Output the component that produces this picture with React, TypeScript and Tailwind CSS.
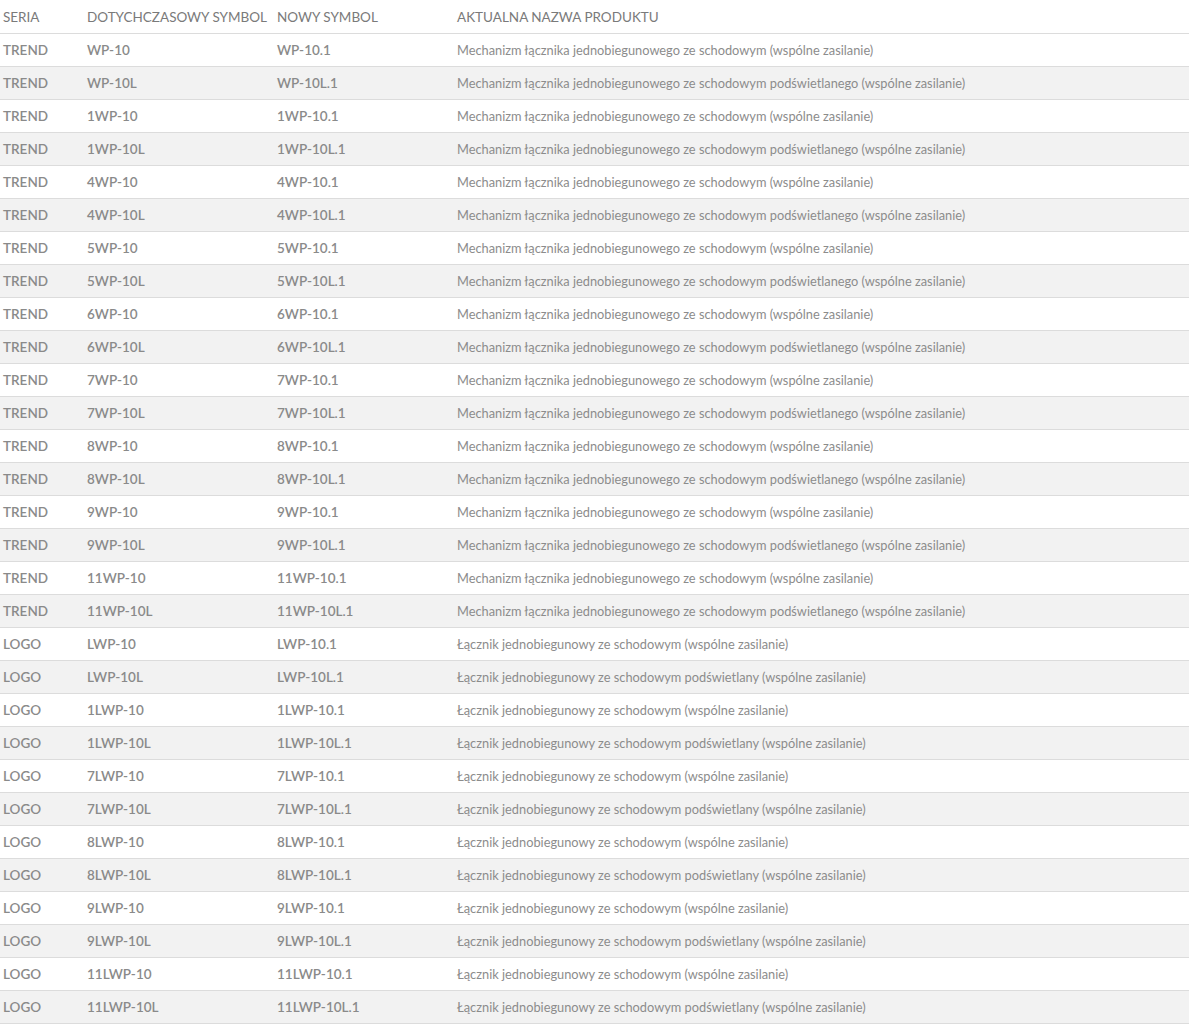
const trend = ['', '1', '4', '5', '6', '7', '8', '9', '11'];
const logo = ['', '1', '7', '8', '9', '11'];

type Row = { seria: string; old: string; next: string; name: string };

const rows: Row[] = [];
trend.forEach((p) => {
  rows.push({
    seria: 'TREND',
    old: `${p}WP-10`,
    next: `${p}WP-10.1`,
    name: 'Mechanizm łącznika jednobiegunowego ze schodowym (wspólne zasilanie)',
  });
  rows.push({
    seria: 'TREND',
    old: `${p}WP-10L`,
    next: `${p}WP-10L.1`,
    name: 'Mechanizm łącznika jednobiegunowego ze schodowym podświetlanego (wspólne zasilanie)',
  });
});
logo.forEach((p) => {
  rows.push({
    seria: 'LOGO',
    old: `${p}LWP-10`,
    next: `${p}LWP-10.1`,
    name: 'Łącznik jednobiegunowy ze schodowym (wspólne zasilanie)',
  });
  rows.push({
    seria: 'LOGO',
    old: `${p}LWP-10L`,
    next: `${p}LWP-10L.1`,
    name: 'Łącznik jednobiegunowy ze schodowym podświetlany (wspólne zasilanie)',
  });
});

export default function App() {
  return (
    <div className="bg-white w-[1191px]" style={{ fontFamily: 'Lato, "Open Sans", sans-serif' }}>
      <table className="w-[1189px] border-collapse text-left">
        <thead>
          <tr className="h-[33px] border-b border-[#dcdcdc]">
            <th className="w-[84px] px-[3px] pt-[2px] font-normal text-[13.5px] text-[#7a7a7a]">SERIA</th>
            <th className="w-[190px] px-[3px] pt-[2px] font-normal text-[13.5px] text-[#7a7a7a]">DOTYCHCZASOWY SYMBOL</th>
            <th className="w-[180px] px-[3px] pt-[2px] font-normal text-[13.5px] text-[#7a7a7a]">NOWY SYMBOL</th>
            <th className="px-[3px] pt-[2px] font-normal text-[13.5px] text-[#7a7a7a]">AKTUALNA NAZWA PRODUKTU</th>
          </tr>
        </thead>
        <tbody>
          {rows.map((r, i) => (
            <tr
              key={i}
              className={`h-[33px] border-b border-[#dcdcdc] ${i % 2 === 1 ? 'bg-[#f2f2f2]' : 'bg-white'}`}
            >
              <td className="px-[3px] pt-[2px] font-semibold text-[13.5px] text-[#8a8a8a]">{r.seria}</td>
              <td className="px-[3px] pt-[2px] font-semibold text-[13.5px] text-[#8a8a8a]">{r.old}</td>
              <td className="px-[3px] pt-[2px] font-semibold text-[13.5px] text-[#8a8a8a]">{r.next}</td>
              <td className="px-[3px] pt-[2px] font-normal text-[12.8px] text-[#8c8c8c]">{r.name}</td>
            </tr>
          ))}
        </tbody>
      </table>
    </div>
  );
}
